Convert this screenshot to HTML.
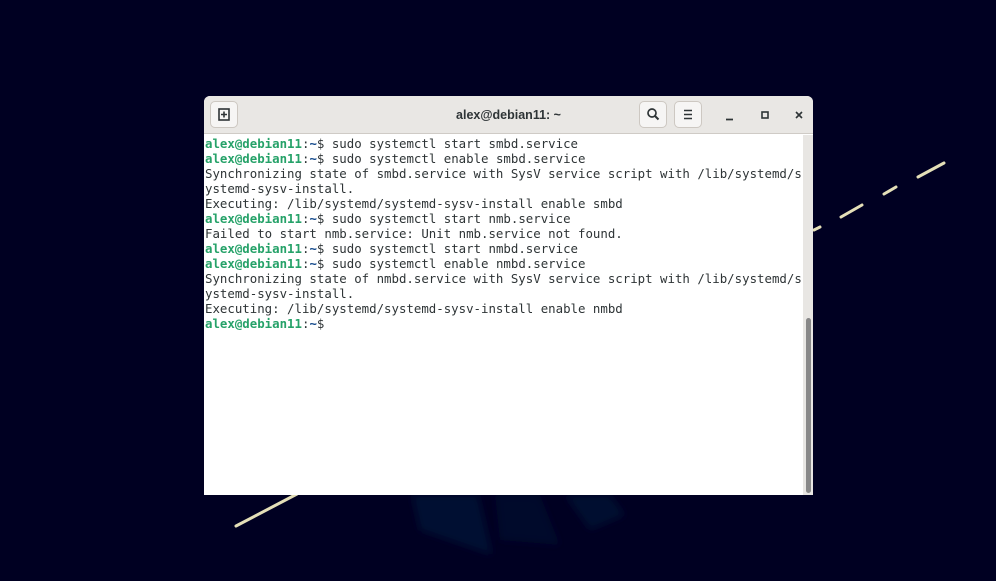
<!DOCTYPE html>
<html><head><meta charset="utf-8"><style>
html,body{margin:0;padding:0}
body{width:996px;height:581px;background:#000022;position:relative;overflow:hidden;font-family:"Liberation Sans",sans-serif}
#win{position:absolute;left:204px;top:96px;width:609px;height:399px;background:#fff;border-radius:6px 6px 0 0;overflow:hidden}
#hdr{position:absolute;left:0;top:0;width:609px;height:38px;background:#e9e7e4;border-bottom:1px solid #cfcbc6;box-sizing:border-box}
.btn{position:absolute;top:5px;width:28px;height:27px;border:1px solid #cdc8c2;border-radius:5px;background:#f6f5f4;box-sizing:border-box}
#title{position:absolute;left:0;right:0;top:12px;text-align:center;font-size:12.5px;font-weight:600;color:#2e3436}
#term{position:absolute;left:1px;top:40px;font-family:"DejaVu Sans Mono","Liberation Mono",monospace;font-size:12.4px;line-height:15px;color:#2e3436;white-space:pre}
.g{color:#26a269;font-weight:bold}.b{color:#12488b;font-weight:bold}
#sb{position:absolute;left:599px;top:39px;width:10px;height:360px;background:#e8e6e3}
#th{position:absolute;left:602px;top:222px;width:5px;height:175px;background:#888;border-radius:3px}
</style></head><body>
<svg width="996" height="581" style="position:absolute;left:0;top:0">
<defs><filter id="bl"><feGaussianBlur stdDeviation="4"/></filter></defs>
<g filter="url(#bl)">
<polygon points="412,495 478,495 492,555 420,530" fill="#032a48" opacity="0.4"/>
<polygon points="495,495 540,495 560,545 500,540" fill="#021a38" opacity="0.35"/>
<polygon points="565,495 610,495 625,515 590,530" fill="#02244a" opacity="0.35"/>
</g>
<g stroke="#e4dfb8" stroke-width="3" stroke-linecap="round">
<line x1="236" y1="526" x2="297" y2="494"/>
<line x1="814" y1="230" x2="820" y2="227"/>
<line x1="841" y1="217" x2="862" y2="205"/>
<line x1="884" y1="194" x2="896" y2="187"/>
<line x1="918" y1="177" x2="944" y2="163"/>
</g></svg>
<div id="win">
<div id="hdr">
<div class="btn" style="left:6px"><svg width="26" height="25"><rect x="8" y="7" width="10" height="11" fill="none" stroke="#2e3436" stroke-width="1.6"/><path d="M13 9.5v6M10 12.5h6" stroke="#2e3436" stroke-width="1.6"/></svg></div>
<div id="title">alex@debian11: ~</div>
<div class="btn" style="left:435px"><svg width="26" height="25"><circle cx="12" cy="11" r="4" fill="none" stroke="#2e3436" stroke-width="1.7"/><path d="M15 14l3.5 3.5" stroke="#2e3436" stroke-width="2"/></svg></div>
<div class="btn" style="left:470px"><svg width="26" height="25"><path d="M9 8.5h8M9 12.5h8M9 16.5h8" stroke="#2e3436" stroke-width="1.6"/></svg></div>
<svg width="120" height="38" style="position:absolute;left:505px;top:0"><path d="M17 23.5h7" stroke="#2e3436" stroke-width="1.8"/><rect x="53" y="16" width="6" height="6" fill="none" stroke="#2e3436" stroke-width="1.6"/><path d="M87 16l6 6M93 16l-6 6" stroke="#2e3436" stroke-width="1.6"/></svg>
</div>
<div id="term"><span class="g">alex@debian11</span>:<span class="b">~</span>$ sudo systemctl start smbd.service
<span class="g">alex@debian11</span>:<span class="b">~</span>$ sudo systemctl enable smbd.service
Synchronizing state of smbd.service with SysV service script with /lib/systemd/s
ystemd-sysv-install.
Executing: /lib/systemd/systemd-sysv-install enable smbd
<span class="g">alex@debian11</span>:<span class="b">~</span>$ sudo systemctl start nmb.service
Failed to start nmb.service: Unit nmb.service not found.
<span class="g">alex@debian11</span>:<span class="b">~</span>$ sudo systemctl start nmbd.service
<span class="g">alex@debian11</span>:<span class="b">~</span>$ sudo systemctl enable nmbd.service
Synchronizing state of nmbd.service with SysV service script with /lib/systemd/s
ystemd-sysv-install.
Executing: /lib/systemd/systemd-sysv-install enable nmbd
<span class="g">alex@debian11</span>:<span class="b">~</span>$</div>
<div id="sb"></div><div id="th"></div>
</div>
</body></html>
